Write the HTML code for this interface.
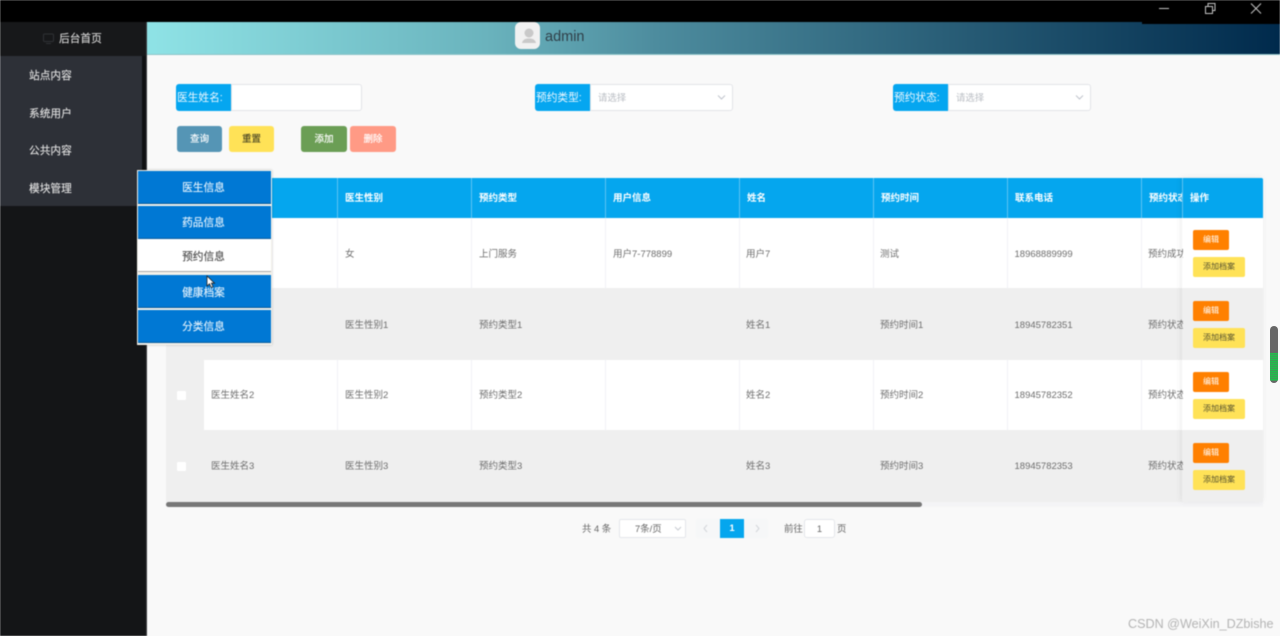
<!DOCTYPE html>
<html lang="zh">
<head>
<meta charset="utf-8">
<style>
html,body{margin:0;padding:0;width:1280px;height:636px;overflow:hidden;background:#f9f9f9}
body{font-family:"Liberation Sans","Noto Sans CJK SC",sans-serif;position:relative}
div,span{position:absolute;box-sizing:border-box;white-space:nowrap}
.wrap{left:0;top:0;width:1280px;height:636px;overflow:hidden;filter:blur(.4px)}
.m{left:29px;font-size:10.7px;color:#dcdcdc;line-height:14px;text-shadow:0 0 .4px #dcdcdc}
.lb{height:27px;width:55px;top:84px;background:#05a6f0;color:#eef8ff;font-size:10.7px;line-height:28px;border-radius:3px 0 0 3px;padding-left:1px}
.ip{height:27px;top:84px;background:#fff;border:1px solid #e2e4e8;border-radius:0 3px 3px 0;font-size:9.4px;color:#b8bcc2;line-height:26px;padding-left:7px}
.btn{top:126px;height:26px;border-radius:3px;font-size:9.5px;line-height:28px;text-align:center;color:#fff;text-shadow:0 0 .4px currentColor}
.th{top:178px;height:39.500px;font-size:9.5px;font-weight:bold;color:#fff;line-height:42px;padding-left:7px;border-left:1px solid #5cc3f3;overflow:hidden}
.r{left:166px;width:1097px}
.cb{left:177px;width:9px;height:9px;background:#fff;border-radius:1px}
.c{font-size:9.5px;color:#6e6e6e;line-height:14px}
.v{width:1px;background:#f1f2f6;height:70px}
.e{left:1193px;width:36px;height:20px;background:#ff8000;color:#fff;font-size:8px;line-height:20px;text-align:center;border-radius:2px}
.a{left:1193px;width:52px;height:20px;background:#ffe257;color:#55512f;font-size:8px;line-height:20px;text-align:center;border-radius:2px}
.p{left:138px;width:133px;height:33px;background:#0078d4;color:#dceefb;font-size:10.7px;line-height:35px;text-align:center;border-bottom:1px solid #0b5d9e;padding-right:2px;text-shadow:0 0 .4px currentColor}
.pg{font-size:9.4px;color:#666;line-height:16px}
</style>
</head>
<body>
<div class="wrap">
  <!-- header -->
  <div style="left:147px;top:22px;width:1133px;height:33px;background:linear-gradient(90deg,#8fe3e6 0%,#6ab3bd 30%,#4d8c9e 45%,#2a5f78 70%,#002a4c 100%);border-bottom:1px solid #8fc4c8"></div>
  <div style="left:0;top:0;width:1280px;height:22px;background:#000"></div>
  <div style="left:1142px;top:0;width:138px;height:24px;background:#000"></div>
  <svg style="position:absolute;left:1150px;top:0" width="130" height="20" viewBox="0 0 130 20" fill="none" stroke="#c4c4c4" stroke-width="1">
    <path d="M9 8.500H19"/>
    <path d="M55.500 6.500h7v7h-7zM58 6.500V3.500h7v7h-2.500"/>
    <path d="M101 3.500l10 10M111 3.500l-10 10"/>
  </svg>
  <div style="left:515px;top:22px;width:25px;height:27px;background:#f1f1f1;border-radius:6px"></div>
  <svg style="position:absolute;left:515px;top:23px" width="25" height="24" viewBox="0 0 25 24"><circle cx="14" cy="10" r="4.500" fill="#c9c9c9"/><path d="M7 20c1-4 4-4.500 7-4.500s6 .5 7 4.500z" fill="#c9c9c9"/></svg>
  <div style="left:545px;top:28px;font-size:14.5px;line-height:18px;color:#2f3f48">admin</div>

  <!-- sidebar -->
  <div style="left:0;top:22px;width:147px;height:614px;background:#141517;border-right:1px solid #3a3b3e"></div>
  <div style="left:0;top:22px;width:146px;height:34px;background:#17181a"></div>
  <svg style="position:absolute;left:43px;top:33px" width="12" height="12" viewBox="0 0 12 12" fill="none" stroke="#2f3135" stroke-width="1"><rect x=".5" y="1" width="10" height="7.500" rx="1"/><path d="M3 10.500h5"/></svg>
  <div style="left:59px;top:32px;font-size:10.7px;line-height:14px;color:#cfcfcf;text-shadow:0 0 .4px #cfcfcf">后台首页</div>
  <div style="left:0;top:56px;width:142px;height:150px;background:#2d3037"></div>
  <div style="left:142px;top:56px;width:4px;height:114px;background:#0f1012"></div>
  <div class="m" style="top:69px">站点内容</div>
  <div class="m" style="top:107px">系统用户</div>
  <div class="m" style="top:144px">公共内容</div>
  <div class="m" style="top:182px">模块管理</div>

  <!-- search -->
  <div class="lb" style="left:176px">医生姓名:</div>
  <div class="ip" style="left:231px;width:131px"></div>
  <div class="lb" style="left:535px">预约类型:</div>
  <div class="ip" style="left:590px;width:143px">请选择</div>
  <svg style="position:absolute;left:717px;top:94px" width="9" height="7" viewBox="0 0 9 7" fill="none" stroke="#c0c4cc"><path d="M1 1.500l3.500 3.500L8 1.500"/></svg>
  <div class="lb" style="left:893px">预约状态:</div>
  <div class="ip" style="left:948px;width:143px">请选择</div>
  <svg style="position:absolute;left:1075px;top:94px" width="9" height="7" viewBox="0 0 9 7" fill="none" stroke="#c0c4cc"><path d="M1 1.500l3.500 3.500L8 1.500"/></svg>
  <div class="btn" style="left:177px;width:45px;background:#5595b5">查询</div>
  <div class="btn" style="left:229px;width:45px;background:#ffe257;color:#4e4a26">重置</div>
  <div class="btn" style="left:301px;width:46px;background:#6b9e55">添加</div>
  <div class="btn" style="left:350px;width:46px;background:#ff9a85">删除</div>

  <!-- table -->
  <div style="left:166px;top:178px;width:1097px;height:39.500px;background:#05a6ee;border-radius:2px 2px 0 0"></div>
  <div class="r" style="top:217.500px;height:71px;background:#fff"></div>
  <div class="r" style="top:288px;height:72px;background:#efefef"></div>
  <div class="r" style="top:360px;height:70px;background:#fff"></div>
  <div class="r" style="top:430px;height:72px;background:#efefef"></div>
  <div style="left:166px;top:218px;width:38px;height:284px;background:#efefef"></div>
  <div style="left:166px;top:502px;width:1097px;height:5px;background:#f4f4f6"></div>
  <div style="left:166px;top:502px;width:756px;height:4.500px;background:#777;border-radius:3px"></div>

  <div class="th" style="left:204px;width:133px;border:0"></div>
  <div class="th" style="left:337px;width:134px">医生性别</div>
  <div class="th" style="left:471px;width:134px">预约类型</div>
  <div class="th" style="left:605px;width:134px">用户信息</div>
  <div class="th" style="left:739px;width:134px">姓名</div>
  <div class="th" style="left:873px;width:134px">预约时间</div>
  <div class="th" style="left:1007px;width:134px">联系电话</div>
  <div class="th" style="left:1141px;width:42px">预约状态</div>

  <!-- vertical cell lines (white rows) -->
  <div class="v" style="left:337px;top:218px"></div><div class="v" style="left:471px;top:218px"></div><div class="v" style="left:605px;top:218px"></div><div class="v" style="left:739px;top:218px"></div><div class="v" style="left:873px;top:218px"></div><div class="v" style="left:1007px;top:218px"></div><div class="v" style="left:1141px;top:218px"></div>
  <div class="v" style="left:337px;top:360px"></div><div class="v" style="left:471px;top:360px"></div><div class="v" style="left:605px;top:360px"></div><div class="v" style="left:739px;top:360px"></div><div class="v" style="left:873px;top:360px"></div><div class="v" style="left:1007px;top:360px"></div><div class="v" style="left:1141px;top:360px"></div>

  <!-- row 1 -->
  <div class="c" style="left:345px;top:248px">女</div>
  <div class="c" style="left:479px;top:248px">上门服务</div>
  <div class="c" style="left:613px;top:248px">用户7-778899</div>
  <div class="c" style="left:746px;top:248px">用户7</div>
  <div class="c" style="left:880px;top:248px">测试</div>
  <div class="c" style="left:1014.500px;top:248px">18968889999</div>
  <div class="c" style="left:1148px;top:248px;width:35px;overflow:hidden">预约成功</div>
  <!-- row 2 -->
  <div class="c" style="left:345px;top:319px">医生性别1</div>
  <div class="c" style="left:479px;top:319px">预约类型1</div>
  <div class="c" style="left:746px;top:319px">姓名1</div>
  <div class="c" style="left:880px;top:319px">预约时间1</div>
  <div class="c" style="left:1014.500px;top:319px">18945782351</div>
  <div class="c" style="left:1148px;top:319px;width:35px;overflow:hidden">预约状态1</div>
  <!-- row 3 -->
  <div class="cb" style="top:391px"></div>
  <div class="c" style="left:211px;top:389px">医生姓名2</div>
  <div class="c" style="left:345px;top:389px">医生性别2</div>
  <div class="c" style="left:479px;top:389px">预约类型2</div>
  <div class="c" style="left:746px;top:389px">姓名2</div>
  <div class="c" style="left:880px;top:389px">预约时间2</div>
  <div class="c" style="left:1014.500px;top:389px">18945782352</div>
  <div class="c" style="left:1148px;top:389px;width:35px;overflow:hidden">预约状态2</div>
  <!-- row 4 -->
  <div class="cb" style="top:461.500px"></div>
  <div class="c" style="left:211px;top:460px">医生姓名3</div>
  <div class="c" style="left:345px;top:460px">医生性别3</div>
  <div class="c" style="left:479px;top:460px">预约类型3</div>
  <div class="c" style="left:746px;top:460px">姓名3</div>
  <div class="c" style="left:880px;top:460px">预约时间3</div>
  <div class="c" style="left:1014.500px;top:460px">18945782353</div>
  <div class="c" style="left:1148px;top:460px;width:35px;overflow:hidden">预约状态3</div>

  <!-- fixed column -->
  <div style="left:1182px;top:178px;width:81px;height:323px;box-shadow:-1px 0 6px rgba(0,0,0,.08)"></div>
  <div class="th" style="left:1182px;width:81px;border-radius:0 2px 0 0;background:#05a6ee">操作</div>
  <div style="left:1183px;top:217.500px;width:80px;height:71px;background:#fff"></div>
  <div style="left:1183px;top:288px;width:80px;height:72px;background:#efefef"></div>
  <div style="left:1183px;top:360px;width:80px;height:70px;background:#fff"></div>
  <div style="left:1183px;top:430px;width:80px;height:71.500px;background:#efefef"></div>
  <div class="e" style="top:230px">编辑</div><div class="a" style="top:257px">添加档案</div>
  <div class="e" style="top:301px">编辑</div><div class="a" style="top:328px">添加档案</div>
  <div class="e" style="top:372px">编辑</div><div class="a" style="top:399px">添加档案</div>
  <div class="e" style="top:443px">编辑</div><div class="a" style="top:470px">添加档案</div>

  <!-- pagination -->
  <div class="pg" style="left:582px;top:521px">共 4 条</div>
  <div style="left:619px;top:519px;width:67px;height:19px;background:#fff;border:1px solid #e4e6ea;border-radius:2px;font-size:9.4px;color:#666;line-height:18px;padding-left:15px">7条/页</div>
  <svg style="position:absolute;left:674px;top:526px" width="8" height="6" viewBox="0 0 8 6" fill="none" stroke="#c8ccd2"><path d="M1 1l3 3 3-3"/></svg>
  <div style="left:696px;top:519px;width:72px;height:19px;background:#f6f7f8;border-radius:2px"></div>
  <svg style="position:absolute;left:702px;top:524px" width="60" height="9" viewBox="0 0 60 9" fill="none" stroke="#d3d6da"><path d="M5 1L2 4.500 5 8M54 1l3 3.500L54 8"/></svg>
  <div style="left:720px;top:519px;width:24px;height:19px;background:#05a6ee;color:#fff;font-size:9.5px;font-weight:bold;line-height:19px;text-align:center">1</div>
  <div class="pg" style="left:784px;top:521px">前往</div>
  <div style="left:804px;top:519px;width:31px;height:19px;background:#fff;border:1px solid #e4e6ea;border-radius:3px;font-size:9.4px;color:#666;line-height:18px;text-align:center">1</div>
  <div class="pg" style="left:837px;top:521px">页</div>

  <!-- popup -->
  <div style="left:137px;top:170px;width:135px;height:175px;background:#f3f1ea;box-shadow:0 0 2px rgba(0,0,0,.25)"></div>
  <div class="p" style="top:171px">医生信息</div>
  <div class="p" style="top:206px">药品信息</div>
  <div class="p" style="top:239px;height:33px;background:#fff;color:#555;border-bottom:1px solid #aaa;line-height:37px">预约信息</div>
  <div class="p" style="top:275px;line-height:37px">健康档案</div>
  <div class="p" style="top:310px">分类信息</div>
  <svg style="position:absolute;left:206px;top:275px" width="10" height="14" viewBox="0 0 10 14"><path d="M1 1v10l2.500-2.200L5.200 12.500l1.800-.8L5.400 8.200H8.500z" fill="#fff" stroke="#222" stroke-width=".8"/></svg>

  <!-- watermark -->
  <div style="left:1128px;top:617px;font-size:12.6px;line-height:15px;color:#b4b4b4">CSDN @WeiXin_DZbishe</div>
</div>
<!-- right widget -->
<div style="left:1270px;top:326px;width:8px;height:57px;background:#666;border-radius:4px;overflow:hidden">
  <div style="left:0;top:27px;width:8px;height:28px;background:repeating-linear-gradient(180deg,#1fc04a 0,#1fc04a 1px,#3f9a58 1px,#3f9a58 2px)"></div>
</div>
</body>
</html>
